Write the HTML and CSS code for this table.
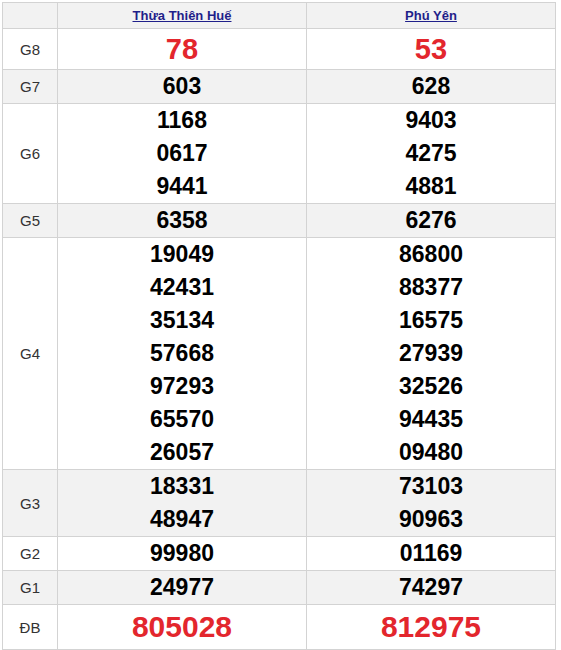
FILE: index.html
```html
<!DOCTYPE html>
<html lang="vi">
<head>
<meta charset="utf-8">
<link rel="stylesheet" href="styles.css">
</head>
<body>
<table class="kq">
  <colgroup><col class="c-label"><col class="c-prov"><col class="c-prov"></colgroup>
  <thead>
    <tr class="alt head">
      <th></th>
      <th><a href="#">Thừa Thiên Huế</a></th>
      <th><a href="#">Phú Yên</a></th>
    </tr>
  </thead>
  <tbody>
    <tr class="g8"><td class="lbl">G8</td><td><div class="n big">78</div></td><td><div class="n big">53</div></td></tr>
    <tr class="alt"><td class="lbl">G7</td><td><div class="n">603</div></td><td><div class="n">628</div></td></tr>
    <tr><td class="lbl">G6</td><td><div class="n">1168</div><div class="n">0617</div><div class="n">9441</div></td><td><div class="n">9403</div><div class="n">4275</div><div class="n">4881</div></td></tr>
    <tr class="alt"><td class="lbl">G5</td><td><div class="n">6358</div></td><td><div class="n">6276</div></td></tr>
    <tr><td class="lbl">G4</td>
      <td><div class="n">19049</div><div class="n">42431</div><div class="n">35134</div><div class="n">57668</div><div class="n">97293</div><div class="n">65570</div><div class="n">26057</div></td>
      <td><div class="n">86800</div><div class="n">88377</div><div class="n">16575</div><div class="n">27939</div><div class="n">32526</div><div class="n">94435</div><div class="n">09480</div></td></tr>
    <tr class="alt"><td class="lbl">G3</td><td><div class="n">18331</div><div class="n">48947</div></td><td><div class="n">73103</div><div class="n">90963</div></td></tr>
    <tr><td class="lbl">G2</td><td><div class="n">99980</div></td><td><div class="n">01169</div></td></tr>
    <tr class="alt"><td class="lbl">G1</td><td><div class="n">24977</div></td><td><div class="n">74297</div></td></tr>
    <tr class="db"><td class="lbl">ĐB</td><td><div class="n big db-n">805028</div></td><td><div class="n big db-n">812975</div></td></tr>
  </tbody>
</table>
</body>
</html>
```
FILE: styles.css
```css
html, body {
  margin: 0;
  padding: 0;
  background: #fff;
}
body {
  padding: 2px 0 0 2px;
  font-family: "Liberation Sans", Arial, sans-serif;
}
.kq {
  border-collapse: collapse;
  width: 554px;
  table-layout: fixed;
}
.c-label { width: 55px; }
.kq th, .kq td {
  border: 1px solid #d3d3d3;
  padding: 0;
  text-align: center;
  vertical-align: middle;
}
.alt { background: #f2f2f2; }
.head th { height: 25px; font-size: 13px; font-weight: bold; }
.head a { color: #1f1f8a; text-decoration: underline; }
.lbl { font-size: 15px; color: #333; }
.n {
  font-size: 23px;
  font-weight: bold;
  line-height: 33px;
  color: #000;
}
.big {
  color: #e3262d;
  font-size: 29px;
  line-height: 40px;
}
.db-n { font-size: 30px; line-height: 44px; }
```
